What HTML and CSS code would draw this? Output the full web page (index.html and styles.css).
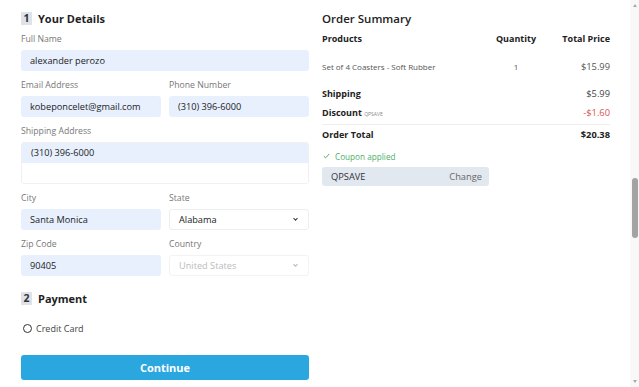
FILE: index.html
```html
<!DOCTYPE html>
<html lang="en">

<head>
    <meta charset="UTF-8">
    <meta name="viewport" content="width=device-width, initial-scale=1.0">
    <title>Checkout</title>
    <link rel="stylesheet" href="styles.css">
</head>

<body>
    <div class="page">
        <main class="checkout">
            <section class="details">
                <h2 class="step-title"><span class="step-num">1</span>Your Details</h2>

                <div class="field">
                    <label>Full Name</label>
                    <div class="input filled">alexander perozo</div>
                </div>

                <div class="row">
                    <div class="field">
                        <label>Email Address</label>
                        <div class="input filled">kobeponcelet@gmail.com</div>
                    </div>
                    <div class="field">
                        <label>Phone Number</label>
                        <div class="input filled">(310) 396-6000</div>
                    </div>
                </div>

                <div class="field">
                    <label>Shipping Address</label>
                    <div class="address">
                        <div class="input filled">(310) 396-6000</div>
                        <div class="input blank"></div>
                    </div>
                </div>

                <div class="row">
                    <div class="field">
                        <label>City</label>
                        <div class="input filled">Santa Monica</div>
                    </div>
                    <div class="field">
                        <label>State</label>
                        <div class="input select">
                            <span>Alabama</span>
                            <svg width="7" height="5" viewBox="0 0 7 5"><path d="M1.5 1.2l2 2 2-2" fill="none" stroke="#444" stroke-width="1.1"/></svg>
                        </div>
                    </div>
                </div>

                <div class="row">
                    <div class="field">
                        <label>Zip Code</label>
                        <div class="input filled">90405</div>
                    </div>
                    <div class="field">
                        <label>Country</label>
                        <div class="input select disabled">
                            <span>United States</span>
                            <svg width="7" height="5" viewBox="0 0 7 5"><path d="M1.5 1.2l2 2 2-2" fill="none" stroke="#bbb" stroke-width="1.1"/></svg>
                        </div>
                    </div>
                </div>

                <h2 class="step-title payment-title"><span class="step-num">2</span>Payment</h2>

                <div class="radio">
                    <span class="radio-dot"></span>
                    <span>Credit Card</span>
                </div>

                <button class="continue">Continue</button>
            </section>

            <section class="summary">
                <h2 class="summary-title">Order Summary</h2>

                <div class="line head">
                    <span class="col-product">Products</span>
                    <span class="col-qty">Quantity</span>
                    <span class="col-price">Total Price</span>
                </div>

                <div class="line item">
                    <span class="col-product">Set of 4 Coasters - Soft Rubber</span>
                    <span class="col-qty">1</span>
                    <span class="col-price">$15.99</span>
                </div>

                <div class="line extra">
                    <span class="col-product strong">Shipping</span>
                    <span class="col-price">$5.99</span>
                </div>

                <div class="line extra discount">
                    <span class="col-product strong">Discount <small>QPSAVE</small></span>
                    <span class="col-price minus">-$1.60</span>
                </div>

                <div class="line total">
                    <span class="col-product strong">Order Total</span>
                    <span class="col-price strong">$20.38</span>
                </div>

                <div class="coupon-ok">
                    <svg width="7" height="6" viewBox="0 0 7 6"><path d="M0.8 3.2l1.8 1.7L6.2 1" fill="none" stroke="#4caf6a" stroke-width="1"/></svg>
                    Coupon applied
                </div>

                <div class="coupon">
                    <span class="code">QPSAVE</span>
                    <span class="change">Change</span>
                </div>
            </section>
        </main>

        <div class="scrollbar">
            <span class="arrow up"></span>
            <div class="track">
                <div class="thumb"></div>
            </div>
            <span class="arrow down"></span>
        </div>
    </div>
</body>

</html>
```

FILE: styles.css
```css
* {
    margin: 0;
    padding: 0;
    box-sizing: border-box;
}

body {
    font-family: "Open Sans", "Liberation Sans", sans-serif;
    background-color: #fff;
    color: #222;
    overflow: hidden;
}

.page {
    display: flex;
    height: 387px;
}

.checkout {
    flex: 1;
    display: flex;
    align-items: flex-start;
    gap: 13px;
    padding: 9px 0 0 21px;
}

.details {
    width: 288px;
    display: flex;
    flex-direction: column;
    gap: 7px;
    margin-top: -1px;
}

.summary {
    width: 288px;
}

/* headings */
.step-title {
    display: flex;
    align-items: center;
    height: 20px;
    font-size: 11px;
    font-weight: 700;
    color: #1f1f1f;
    margin-bottom: -3px;
}

.step-num {
    width: 11px;
    height: 13px;
    line-height: 13px;
    margin-right: 6px;
    background-color: #dfe3e9;
    font-size: 10.5px;
    text-align: center;
    color: #333;
}

.payment-title {
    margin-top: 5px;
}

/* fields */
.row {
    display: flex;
    gap: 8px;
}

.row .field {
    flex: 1;
}

.field label {
    display: block;
    height: 14px;
    line-height: 14px;
    margin-bottom: 4px;
    font-size: 8.7px;
    color: #777;
}

.input {
    height: 21px;
    line-height: 21px;
    padding: 0 9px;
    font-size: 9.2px;
    color: #222;
    border-radius: 3px;
    white-space: nowrap;
    overflow: hidden;
}

.filled {
    background-color: #e8f0fe;
}

.address {
    border: 1px solid #f0f0f0;
    border-radius: 3px;
    overflow: hidden;
}

.address .input {
    border-radius: 0;
    height: 20px;
    line-height: 20px;
}

.blank {
    background-color: #fff;
}

.select {
    display: flex;
    align-items: center;
    justify-content: space-between;
    border: 1px solid #eee;
    background-color: #fff;
}

.disabled {
    color: #bbb;
    border-color: #f3f3f3;
}

/* payment */
.radio {
    display: flex;
    align-items: center;
    gap: 4px;
    margin-top: 10px;
    padding-left: 2px;
    font-size: 9px;
    color: #444;
}

.radio-dot {
    width: 9px;
    height: 9px;
    border: 1.3px solid #333;
    border-radius: 50%;
}

.continue {
    margin-top: 13px;
    height: 25px;
    border: none;
    border-radius: 3px;
    background-color: #2ba7e0;
    color: #fff;
    font-family: inherit;
    font-size: 11px;
    font-weight: 700;
}

/* summary */
.summary-title {
    height: 19px;
    line-height: 19px;
    font-size: 11.5px;
    font-weight: 600;
    color: #222;
}

.line {
    display: flex;
    align-items: center;
    font-size: 9.3px;
}

.col-product {
    flex: 1;
}

.col-qty {
    width: 60px;
    text-align: center;
}

.col-price {
    width: 64px;
    text-align: right;
}

.head {
    height: 20px;
    font-size: 9px;
    font-weight: 700;
    color: #222;
}

.item {
    height: 36px;
    font-size: 8px;
    color: #555;
}

.item .col-price {
    font-size: 9.3px;
}

.extra {
    height: 19px;
    color: #444;
}

.strong {
    font-size: 9px;
    font-weight: 700;
    color: #222;
}

.discount small {
    font-size: 5px;
    font-weight: 400;
    color: #888;
}

.minus {
    color: #d9534f;
}

.total {
    height: 19px;
    margin-top: 2px;
    border-top: 1px solid #eee;
}

.total .col-price {
    font-size: 9.3px;
}

.coupon-ok {
    display: flex;
    align-items: center;
    gap: 5px;
    height: 12px;
    margin-top: 7px;
    padding-left: 1px;
    font-size: 8.2px;
    color: #4caf6a;
}

.coupon {
    display: flex;
    justify-content: space-between;
    align-items: center;
    width: 167px;
    height: 19px;
    margin-top: 5px;
    padding: 0 7px 0 9px;
    background-color: #e2e8f0;
    border-radius: 3px;
    font-size: 9.3px;
}

.code {
    color: #333;
}

.change {
    color: #666;
}

/* fake scrollbar */
.scrollbar {
    width: 9px;
    display: flex;
    flex-direction: column;
    align-items: center;
    background-color: #f8f8f8;
}

.arrow {
    width: 0;
    height: 0;
    margin: 4px 0;
    border-left: 2px solid transparent;
    border-right: 2px solid transparent;
}

.arrow.up {
    border-bottom: 3px solid #aaa;
}

.arrow.down {
    border-top: 3px solid #aaa;
}

.track {
    flex: 1;
    width: 100%;
    padding-top: 167px;
    display: flex;
    justify-content: center;
}

.thumb {
    width: 6px;
    height: 60px;
    border-radius: 3px;
    background-color: #a3a3a3;
}
```
